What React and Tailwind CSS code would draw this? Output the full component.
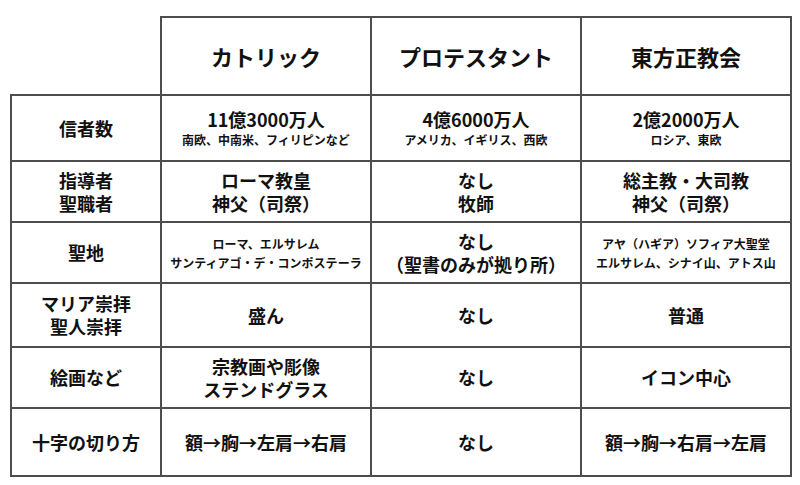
import React from 'react';

const rows = [
  {
    label: ['信者数'],
    h: 'h-[66px]',
    cells: [
      { main: ['11億3000万人'], sub: ['南欧、中南米、フィリピンなど'] },
      { main: ['4億6000万人'], sub: ['アメリカ、イギリス、西欧'] },
      { main: ['2億2000万人'], sub: ['ロシア、東欧'] },
    ],
  },
  {
    label: ['指導者', '聖職者'],
    h: 'h-[61px]',
    cells: [
      { main: ['ローマ教皇', '神父（司祭）'] },
      { main: ['なし', '牧師'] },
      { main: ['総主教・大司教', '神父（司祭）'] },
    ],
  },
  {
    label: ['聖地'],
    h: 'h-[61px]',
    cells: [
      { sub: ['ローマ、エルサレム', 'サンティアゴ・デ・コンポステーラ'] },
      { main: ['なし', '（聖書のみが拠り所）'] },
      { sub: ['アヤ（ハギア）ソフィア大聖堂', 'エルサレム、シナイ山、アトス山'] },
    ],
  },
  {
    label: ['マリア崇拝', '聖人崇拝'],
    h: 'h-[64px]',
    cells: [{ main: ['盛ん'] }, { main: ['なし'] }, { main: ['普通'] }],
  },
  {
    label: ['絵画など'],
    h: 'h-[61px]',
    cells: [
      { main: ['宗教画や彫像', 'ステンドグラス'] },
      { main: ['なし'] },
      { main: ['イコン中心'] },
    ],
  },
  {
    label: ['十字の切り方'],
    h: 'h-[68px]',
    cells: [
      { main: ['額→胸→左肩→右肩'] },
      { main: ['なし'] },
      { main: ['額→胸→右肩→左肩'] },
    ],
  },
];

// lines joined with <br/> so each block is one text element
const Lines = ({ lines }) =>
  lines.map((t, i) => (
    <React.Fragment key={t}>
      {i > 0 && <br />}
      {t}
    </React.Fragment>
  ));

const Cell = ({ main, sub }) => (
  <td className="border-2 border-[#4d4d4d] text-center align-middle p-0">
    {main && (
      <p className="text-[18px] leading-[23px]">
        <Lines lines={main} />
      </p>
    )}
    {sub && (
      <p className={`text-[12px] ${main ? 'leading-[17px]' : 'leading-[19px]'}`}>
        <Lines lines={sub} />
      </p>
    )}
  </td>
);

export default function App() {
  return (
    <div
      className="w-[800px] h-[485px] bg-white pt-4 pl-[10px] text-[#111] font-bold"
      style={{ fontFamily: '"Noto Sans CJK JP", "Noto Sans", sans-serif' }}
    >
      <table className="table-fixed border-collapse w-[780px]">
        <colgroup>
          <col className="w-[150px]" />
          <col className="w-[210px]" />
          <col className="w-[210px]" />
          <col className="w-[210px]" />
        </colgroup>
        <thead>
          <tr className="h-[78px]">
            <th className="p-0 border-r-2 border-b-2 border-[#4d4d4d]"></th>
            {['カトリック', 'プロテスタント', '東方正教会'].map((t) => (
              <th key={t} className="border-2 border-[#4d4d4d] text-[22px] font-bold p-0">
                {t}
              </th>
            ))}
          </tr>
        </thead>
        <tbody>
          {rows.map((r) => (
            <tr key={r.label[0]} className={r.h}>
              <td className="border-2 border-[#4d4d4d] text-center align-middle text-[18px] leading-[23px] p-0">
                <Lines lines={r.label} />
              </td>
              {r.cells.map((c, i) => (
                <Cell key={i} {...c} />
              ))}
            </tr>
          ))}
        </tbody>
      </table>
    </div>
  );
}
